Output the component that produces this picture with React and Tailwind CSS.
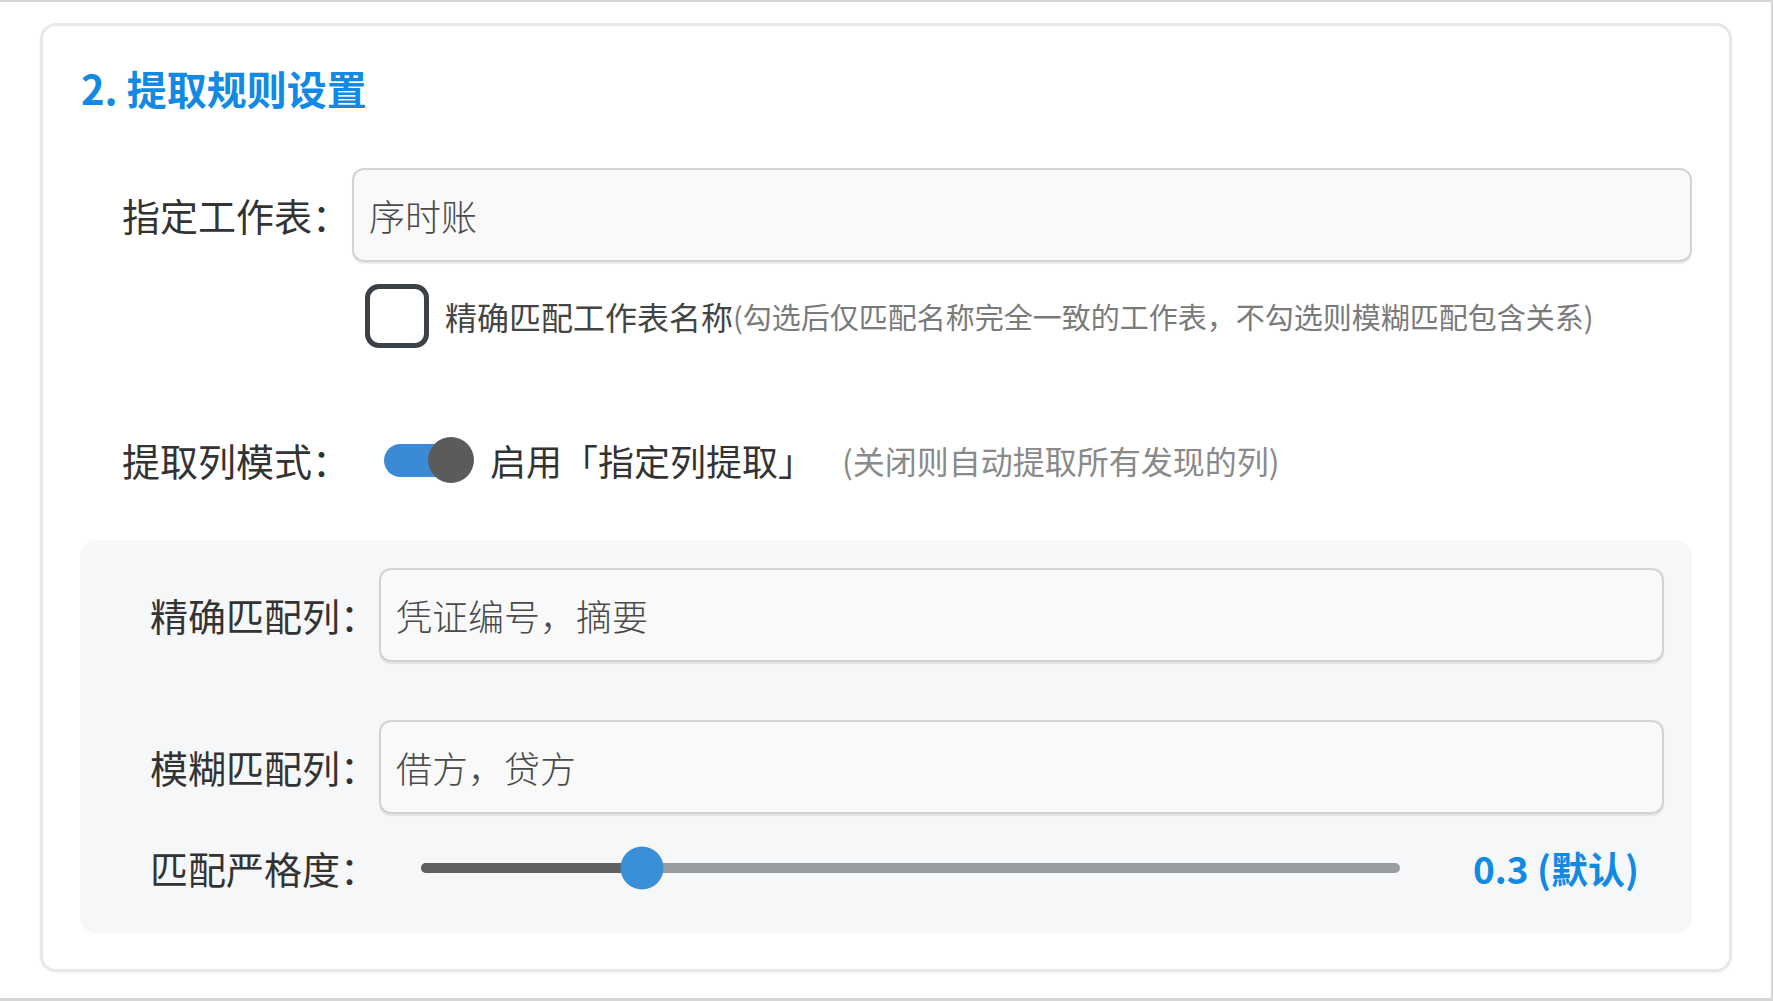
import React, { useState } from "react";

const FONT = { fontFamily: '"Microsoft YaHei", "Noto Sans CJK SC", "Noto Sans", sans-serif' };

function Field({ label, placeholder, labelWidth = "w-[230px]" }) {
  return (
    <div className="flex items-center">
      <span className={`${labelWidth} shrink-0 text-[38px] leading-none text-[#333]`}>{label}</span>
      <input
        placeholder={placeholder}
        className="flex-1 h-[94px] rounded-[12px] border-2 border-[#d3d3d3] bg-[#f9f9f9] pl-[15px] text-[36px] font-light text-[#444] placeholder:text-[#4a4a4a] shadow-[0_2px_1px_rgba(0,0,0,0.08)] outline-none"
      />
    </div>
  );
}

export default function App() {
  const [exact, setExact] = useState(false);
  const [useCols, setUseCols] = useState(true);
  const strictness = 0.3;

  return (
    <div
      style={FONT}
      className="w-[1773px] h-[1001px] bg-white border-t-2 border-r-2 border-b-[3px] border-[#d6d6d6] pt-[21px] pl-[40px] pr-[39px]"
    >
      <div className="h-[949px] rounded-[16px] border-[3px] border-[#e8e8e8] bg-white px-[37px] pt-[38px] shadow-[0_1px_3px_rgba(0,0,0,0.05)]">
        {/* heading */}
        <h2 className="ml-[1px] text-[40px] leading-[48px] font-bold text-[#1289e2]">2. 提取规则设置</h2>

        {/* sheet name */}
        <div className="mt-[56px] pl-[42px]">
          <Field label="指定工作表：" placeholder="序时账" />
          <div className="mt-[22px] ml-[243px] flex items-center">
            <button
              type="button"
              onClick={() => setExact(v => !v)}
              className="w-[64px] h-[64px] shrink-0 rounded-[14px] border-[5px] border-[#3b4147] bg-white"
            />
            <span className="ml-[16px] text-[32px] leading-none text-[#444]">精确匹配工作表名称</span>
            <span className="text-[29px] leading-none text-[#7a7a7a]">(勾选后仅匹配名称完全一致的工作表，不勾选则模糊匹配包含关系)</span>
          </div>
        </div>

        {/* column mode */}
        <div className="mt-[82px] h-[60px] pl-[42px] flex items-center">
          <span className="w-[230px] shrink-0 text-[38px] leading-none text-[#333]">提取列模式：</span>
          <button
            type="button"
            onClick={() => setUseCols(v => !v)}
            className="relative ml-[32px] w-[80px] h-[33px] rounded-full bg-[#3a8ad6]"
          >
            <span className="absolute left-[44px] top-1/2 -translate-y-1/2 w-[46px] h-[46px] rounded-full bg-[#5b5b5b]" />
          </button>
          <span className="ml-[26px] text-[36px] leading-none text-[#333]">启用「指定列提取」</span>
          <span className="ml-[28px] text-[32px] leading-none text-[#8a8a8a]">(关闭则自动提取所有发现的列)</span>
        </div>

        {/* column settings panel */}
        <div className="mt-[50px] h-[393px] rounded-[16px] bg-[#f6f7f9] pl-[70px] pr-[28px] pt-[28px]">
          <Field label="精确匹配列：" placeholder="凭证编号，摘要" labelWidth="w-[229px]" />
          <div className="mt-[58px]">
            <Field label="模糊匹配列：" placeholder="借方，贷方" labelWidth="w-[229px]" />
          </div>

          <div className="mt-[32px] h-[44px] flex items-center">
            <span className="w-[229px] shrink-0 text-[38px] leading-none text-[#333]">匹配严格度：</span>
            <div className="relative ml-[42px] w-[979px] h-[10px] rounded-full bg-[#999da2]">
              <div className="h-full w-[221px] rounded-full bg-[#606060]" />
              <span className="absolute left-[221px] top-1/2 -translate-x-1/2 -translate-y-1/2 w-[43px] h-[43px] rounded-full bg-[#3a8fd6]" />
            </div>
            <span className="ml-[73px] text-[37px] leading-none font-bold text-[#1289e2]">{strictness} (默认)</span>
          </div>
        </div>
      </div>
    </div>
  );
}
